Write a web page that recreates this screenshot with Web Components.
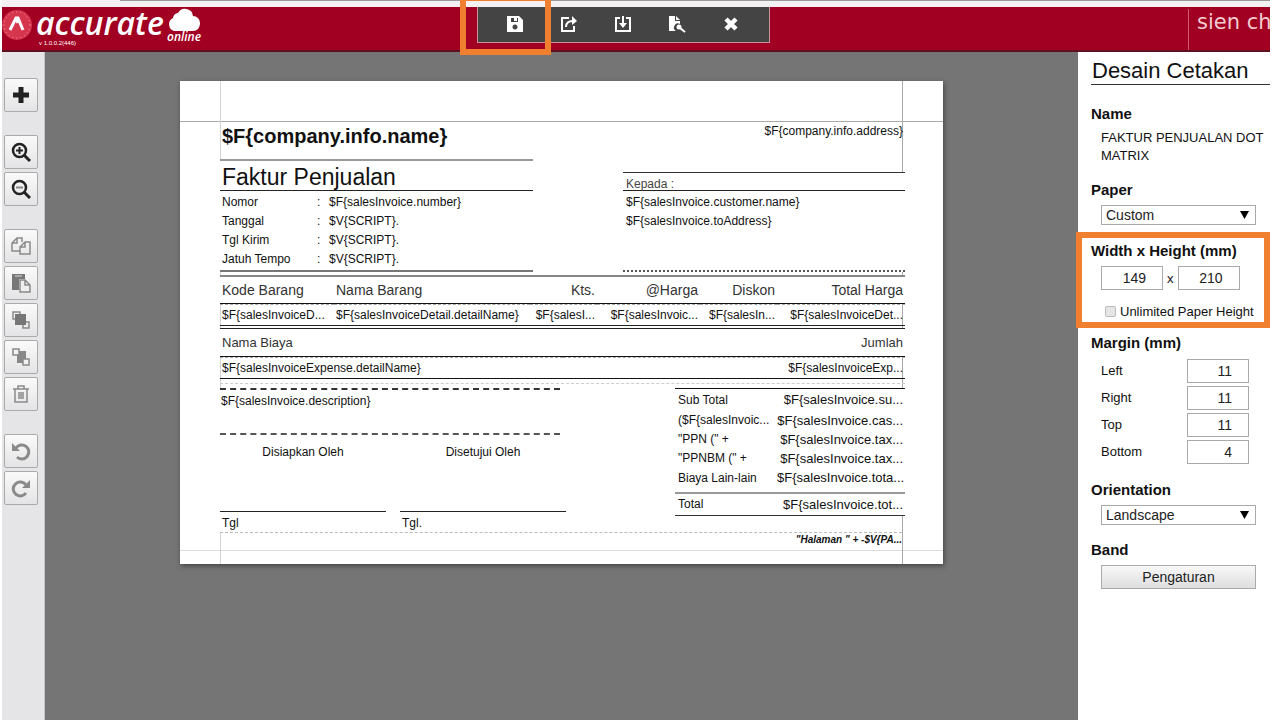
<!DOCTYPE html>
<html lang="id">
<head>
<meta charset="utf-8">
<title>Desain Cetakan</title>
<style>
  html, body { margin: 0; height: 100%; }
  body {
    font-family: "Liberation Sans", Arial, sans-serif;
    font-size: 13px; color: #111; background: #fff; overflow: hidden;
  }
</style>
</head>
<body>
<designer-app>
  <app-header slot="header">
    <tool-button label="Simpan">
      <svg width="18" height="18" viewBox="0 0 18 18"><path fill="#fff" fill-rule="evenodd" d="M1 1h12l4 4v12H1zM5 3v4h7V3zM9 9.500a2.500 2.500 0 1 0 0.010 0z"/><path fill="#fff" d="M8 3h3v3H8z"/></svg>
    </tool-button>
    <tool-button label="Ekspor">
      <svg width="18" height="18" viewBox="0 0 18 18" fill="none" stroke="#fff" stroke-width="2"><path d="M9 3H2v13h12v-5"/><path d="M6 12c0-5 3-6 7-6" /><path d="M12 1l5 5-5 4z" fill="#fff" stroke="none"/></svg>
    </tool-button>
    <tool-button label="Impor">
      <svg width="18" height="18" viewBox="0 0 18 18" fill="none" stroke="#fff" stroke-width="2"><path d="M6 3H2v13h14V3h-4M9 1v9"/><path d="M5 8h8l-4 5z" fill="#fff" stroke="none"/></svg>
    </tool-button>
    <tool-button label="Pratinjau">
      <svg width="18" height="18" viewBox="0 0 18 18"><path fill="#fff" d="M1 1h6v5h5v3a4 4 0 0 0-4 7H1zM8 1l4 4H8z"/><circle cx="11" cy="12" r="2.500" fill="#fff"/><path d="M12 13l5 4" stroke="#fff" stroke-width="2"/></svg>
    </tool-button>
    <tool-button label="Tutup">
      <svg width="18" height="18" viewBox="0 0 18 18"><path d="M4 4l10 10M14 4L4 14" stroke="#fff" stroke-width="4.500"/></svg>
    </tool-button>
  </app-header>
  <tool-rail slot="rail"></tool-rail>
  <report-paper slot="canvas"></report-paper>
  <design-panel slot="panel"></design-panel>
</designer-app>

<script>
const define = (name, html, setup) => {
  const tpl = document.createElement('template');
  tpl.innerHTML = html;
  customElements.define(name, class extends HTMLElement {
    constructor() {
      super();
      this.attachShadow({ mode: 'open' }).append(tpl.content.cloneNode(true));
    }
    connectedCallback() { if (setup) setup(this, this.shadowRoot); }
  });
};

define('designer-app', `
<style>
  :host { display: flex; flex-direction: column; min-height: 100vh; padding: 0 10px 0 2px; box-sizing: border-box; }
  .strip { height: 7px; background: #f3f1f1; display: flex; justify-content: flex-end; }
  .strip i { height: 1px; width: calc(100% - 118px); background: #999; }
  .body { flex: 1; display: grid; grid-template-columns: 43px 1fr 192px; }
  .rail { background: #e5e4e6; border-right: 1px solid #c4c4c4; }
  .canvas { background: #757575; padding-top: 29px; }
</style>
<div class="strip"><i></i></div>
<slot name="header"></slot>
<div class="body">
  <div class="rail"><slot name="rail"></slot></div>
  <main class="canvas"><slot name="canvas"></slot></main>
  <slot name="panel"></slot>
</div>`);

define('app-header', `
<style>
  :host {
    display: grid; grid-template-columns: 475px auto 1fr 82px; height: 45px; box-sizing: border-box;
    background: #a20022; border-bottom: 2px solid #5e1020; color: #fff;
  }
  .logo { display: flex; align-items: flex-start; color: #fff; text-decoration: none; font-family: "Open Sans", sans-serif; font-style: italic; font-weight: 700; }
  .mark { margin-top: 3px; }
  .word { display: flex; flex-direction: column; margin-left: 4px; width: 131px; }
  .word b { font-size: 32px; font-weight: 600; line-height: 32px; height: 33px; }
  .word small { font: 6px/6px "Liberation Sans", sans-serif; margin-left: 3px; }
  .on { display: flex; flex-direction: column; font-size: 12px; line-height: 12px; font-weight: 600; }
  nav {
    position: relative; display: flex; height: 36px; padding: 0 11px 0 10px; box-sizing: border-box;
    background: #444; border: 1px solid #c9929b; border-top: 0;
  }
  .mark-box { position: absolute; left: -18px; top: -12px; width: 79px; height: 48px; border: 6px solid #f08030; pointer-events: none; }
  .user {
    grid-column: 4; border-left: 1px solid #d25a6c; padding-left: 8px; margin-top: 2px; overflow: hidden;
    white-space: nowrap; font: 21px/26px "DejaVu Sans", sans-serif; color: #f3ccd2;
  }
</style>
<a class="logo" href="#" aria-label="accurate online">
  <svg class="mark" width="30" height="30" viewBox="0 0 30 30"><circle cx="15" cy="15" r="15" fill="#d5364e"/><circle cx="15" cy="15" r="13" fill="none" stroke="#f0a0aa" stroke-dasharray="1 3"/><path d="M8 20l6-12h2l5 12M14 8l2 5" fill="none" stroke="#fff" stroke-width="3"/></svg>
  <span class="word"><b>accurate</b><small>v 1.0.0.2(446)</small></span>
  <span class="on">
    <svg width="34" height="24" viewBox="0 0 34 24"><path fill="#fff" d="M7 24a7 7 0 0 1-1-13 6 6 0 0 1 5-5 8 8 0 0 1 15 3 7 7 0 0 1 7 7c0 5-3 8-7 8z"/></svg>
    <span>online</span>
  </span>
</a>
<nav aria-label="Dokumen"><slot></slot><span class="mark-box"></span></nav>
<div class="user">sien ch</div>`);

define('tool-button', `
<style>
  :host { display: block; }
  button { width: 54px; height: 34px; padding: 0; border: 0; background: none; display: grid; place-items: center; }
</style>
<button type="button"><slot></slot></button>`,
(host, root) => root.querySelector('button').setAttribute('aria-label', host.getAttribute('label')));

define('rail-button', `
<style>
  :host { display: block; }
  button {
    width: 34px; height: 34px; padding: 0; box-sizing: border-box; display: grid; place-items: center;
    border: 1px solid #aaa; border-radius: 2px; background: linear-gradient(#fafafa, #e4e4e6);
  }
</style>
<button type="button"><slot></slot></button>`,
(host, root) => root.querySelector('button').setAttribute('aria-label', host.getAttribute('label')));

define('tool-rail', `
<style>
  :host { display: flex; flex-direction: column; gap: 23px; padding: 26px 0 0 2px; }
  div { display: flex; flex-direction: column; gap: 3px; }
  svg { width: 20px; height: 20px; fill: none; stroke: #8a8a8a; stroke-width: 2; }
  .dark { stroke: #222; }
</style>
<div>
  <rail-button label="Tambah"><svg class="dark" viewBox="0 0 20 20"><path d="M10 2v16M2 10h16" stroke-width="5"/></svg></rail-button>
</div>
<div>
  <rail-button label="Perbesar"><svg class="dark" viewBox="0 0 20 20"><circle cx="8.500" cy="8.500" r="6.500" stroke-width="2.500"/><path d="M13 13l6 6" stroke-width="3"/><path d="M8.500 5v7M5 8.500h7"/></svg></rail-button>
  <rail-button label="Perkecil"><svg class="dark" viewBox="0 0 20 20"><circle cx="8.500" cy="8.500" r="6.500" stroke-width="2.500"/><path d="M13 13l6 6" stroke-width="3"/><path d="M5 8.500h7" stroke="#888"/></svg></rail-button>
</div>
<div>
  <rail-button label="Salin"><svg viewBox="0 0 20 20"><path d="M9 15H1V7l5-5h5v4M6 2v5H1M9 18V11l5-5h5v12zM14 6v5H9" stroke-width="1.500"/></svg></rail-button>
  <rail-button label="Tempel"><svg viewBox="0 0 20 20"><path d="M1 1h13v5H8v11H1z" fill="#777" stroke="none"/><path d="M4 3h7" stroke="#ddd" stroke-width="1"/><path d="M9 7h5l5 5v7H9zM14 7v5h5" fill="#eee" stroke-width="1.500"/></svg></rail-button>
  <rail-button label="Ke depan"><svg viewBox="0 0 20 20"><path d="M2 2h7v7H2zM12 12h6v6h-6z" stroke-width="1.500"/><path d="M4 4h11v11H4z" fill="#777" stroke="none"/></svg></rail-button>
  <rail-button label="Ke belakang"><svg viewBox="0 0 20 20"><path d="M6 4h9v12H6z" fill="#888" stroke="none"/><path d="M2 2h6v6H2zM12 12h6v6h-6z" style="fill:#f2f2f2" stroke-width="1.500"/></svg></rail-button>
  <rail-button label="Hapus"><svg viewBox="0 0 20 20"><path d="M2 5h16M7 5V2h6v3M4 5v13h12V5M8 8v7M10 8v7M12 8v7" stroke-width="1.500"/></svg></rail-button>
</div>
<div>
  <rail-button label="Urungkan"><svg viewBox="0 0 20 20"><path d="M5 7a7 7 0 1 1 1 9" stroke-width="3"/><path d="M1 2v8h8z" fill="#8a8a8a" stroke="none"/></svg></rail-button>
  <rail-button label="Ulangi"><svg viewBox="0 0 20 20"><path d="M15 7a7 7 0 1 0 0 8" stroke-width="3"/><path d="M19 2v8h-8z" fill="#8a8a8a" stroke="none"/></svg></rail-button>
</div>`);

define('report-paper', `
<style>
  :host {
    display: block; position: relative; width: 763px; margin: 0 auto; box-sizing: border-box;
    padding: 41px 38px 13px 40px; background: #fff; box-shadow: 1px 2px 5px #444;
    font-size: 12px; line-height: 19px; white-space: nowrap; color: #111;
  }
  .guide { position: absolute; background: #c4c4c4; }
  .gt { left: 0; right: 0; top: 40px; height: 1px; background: #aaa; }
  .gb { left: 0; right: 0; bottom: 13px; height: 1px; background: #ddd; }
  .gl { top: 0; bottom: 0; left: 40px; width: 1px; background: #d4d4d4; }
  .gr { top: 0; bottom: 0; right: 40px; width: 1px; background: #aaa; }
  .sheet { position: relative; }
  .cols { display: flex; justify-content: space-between; }
  .left { width: 313px; }
  .right { width: 282px; }
  h1, h2 { margin: 0; padding-left: 2px; }
  h1 { font-size: 20px; line-height: 28px; height: 37px; font-weight: 700; border-bottom: 2px solid #999; }
  h2 { font-size: 23px; line-height: 32px; height: 29px; font-weight: 400; border-bottom: 1px solid #222; background: #fff; }
  dl { margin: 0; padding: 2px 2px 1px; height: 76px; display: grid; grid-template-columns: 95px 12px 1fr; grid-auto-rows: 19px; background: #fff; border-bottom: 2px solid #777; }
  dt, dd { margin: 0; }
  .addr { height: 50px; text-align: right; padding-right: 2px; border-bottom: 1px solid #333; }
  .kepada { height: 17px; line-height: 22px; padding-left: 3px; border-bottom: 1px solid #222; background: #fff; color: #444; }
  .to { height: 77px; padding: 2px 3px 0; background: #fff; border-bottom: 2px dotted #555; }
  .to p { margin: 0; }
  table { width: 100%; border-collapse: separate; border-spacing: 0; table-layout: fixed; }
  th, td { padding: 0 2px; font-weight: 400; text-align: right; overflow: hidden; line-height: 19px; }
  .l { text-align: left; }
  .items th { height: 26px; font-size: 13px; background: #fff; color: #333; border-bottom: 1px solid #111; }
  .items td { height: 20px; border-top: 1px dashed #aaa; }
  .detail { margin-top: 3px; border-top: 2px solid #888; }
  .detail th { font-size: 14px; }
  .detail td { border-bottom: 4px double #222; }
  .cost th { height: 27px; }
  .cost td { border-bottom: 1px solid #111; }
  .band { height: 9px; }
  .band i { display: block; height: 4px; border-bottom: 1px dashed #ccc; }
  .notes { width: 346px; }
  .desc { width: 340px; height: 43px; line-height: 22px; text-indent: 1px; border-top: 2px dashed #333; border-bottom: 2px dashed #555; background: #fff; }
  .signs { display: flex; gap: 14px; background: #fff; }
  .sign { width: 166px; }
  .sign p { margin: 0; height: 65px; padding-top: 11px; line-height: 12px; text-align: center; border-bottom: 1px solid #222; }
  .sign span { display: block; height: 20px; line-height: 22px; padding-left: 2px; overflow: hidden; }
  .totals { width: 230px; }
  .totals th, .totals td { height: 19px; background: #fff; }
  .totals td { font-size: 13px; }
  .totals th { text-align: left; padding-left: 3px; }
  .totals tr:first-child > * { border-top: 1px solid #111; height: 22px; line-height: 22px; }
  .totals tr:nth-child(5) > * { border-bottom: 2px solid #999; height: 24px; line-height: 20px; vertical-align: top; }
  .totals tr:last-child > * { border-bottom: 1px solid #333; height: 21px; }
  .page { border-top: 1px dashed #bbb; margin-right: 3px; height: 18px; text-align: right; font-size: 10px; line-height: 14px; font-style: italic; font-weight: 700; }
</style>
<div class="guide gt"></div><div class="guide gb"></div><div class="guide gl"></div><div class="guide gr"></div>
<div class="sheet">
  <div class="cols">
    <div class="left">
      <h1>$F{company.info.name}</h1>
      <h2>Faktur Penjualan</h2>
      <dl>
        <dt>Nomor</dt><dd>:</dd><dd>$F{salesInvoice.number}</dd>
        <dt>Tanggal</dt><dd>:</dd><dd>$V{SCRIPT}.</dd>
        <dt>Tgl Kirim</dt><dd>:</dd><dd>$V{SCRIPT}.</dd>
        <dt>Jatuh Tempo</dt><dd>:</dd><dd>$V{SCRIPT}.</dd>
      </dl>
    </div>
    <div class="right">
      <div class="addr">$F{company.info.address}</div>
      <div class="kepada">Kepada :</div>
      <div class="to"><p>$F{salesInvoice.customer.name}</p><p>$F{salesInvoice.toAddress}</p></div>
    </div>
  </div>
  <table class="items detail">
    <colgroup><col style="width:114px"><col style="width:196px"><col style="width:67px"><col style="width:103px"><col style="width:77px"><col></colgroup>
    <thead><tr><th class="l">Kode Barang</th><th class="l">Nama Barang</th><th>Kts.</th><th>@Harga</th><th>Diskon</th><th>Total Harga</th></tr></thead>
    <tbody><tr><td class="l">$F{salesInvoiceD...</td><td class="l">$F{salesInvoiceDetail.detailName}</td><td>$F{salesI...</td><td>$F{salesInvoic...</td><td>$F{salesIn...</td><td>$F{salesInvoiceDet...</td></tr></tbody>
  </table>
  <table class="items cost">
    <thead><tr><th class="l">Nama Biaya</th><th>Jumlah</th></tr></thead>
    <tbody><tr><td class="l">$F{salesInvoiceExpense.detailName}</td><td>$F{salesInvoiceExp...</td></tr></tbody>
  </table>
  <div class="band"><i></i></div>
  <div class="cols">
    <div class="notes">
      <div class="desc">$F{salesInvoice.description}</div>
      <div class="signs">
        <div class="sign"><p>Disiapkan Oleh</p><span>Tgl</span></div>
        <div class="sign"><p>Disetujui Oleh</p><span>Tgl.</span></div>
      </div>
    </div>
    <div class="totals">
      <table>
        <colgroup><col style="width:100px"><col></colgroup>
        <tr><th>Sub Total</th><td>$F{salesInvoice.su...</td></tr>
        <tr><th>($F{salesInvoic...</th><td>$F{salesInvoice.cas...</td></tr>
        <tr><th>"PPN (" +</th><td>$F{salesInvoice.tax...</td></tr>
        <tr><th>"PPNBM (" +</th><td>$F{salesInvoice.tax...</td></tr>
        <tr><th>Biaya Lain-lain</th><td>$F{salesInvoice.tota...</td></tr>
        <tr><th>Total</th><td>$F{salesInvoice.tot...</td></tr>
      </table>
    </div>
  </div>
  <div class="page">"Halaman " + -$V{PA...</div>
</div>`);

define('panel-group', `
<style>
  :host { display: block; margin-top: 15px; }
  h3 { margin: 0 0 5px; font-size: 15px; line-height: 20px; font-weight: 700; }
  .body { margin-left: 10px; }
</style>
<h3></h3><div class="body"><slot></slot></div>`,
(host, root) => { root.querySelector('h3').textContent = host.getAttribute('label'); });

define('design-panel', `
<style>
  :host { display: block; padding-left: 13px; background: #fff; }
  h2 { margin: 0 0 19px; padding-left: 1px; height: 32px; line-height: 38px; font-size: 22px; font-weight: 400; border-bottom: 1px solid #333; }
  p { margin: 0; line-height: 18px; }
  .pick { position: relative; width: 155px; }
  select {
    display: block; width: 100%; height: 20px; padding: 0 4px; box-sizing: border-box; appearance: none;
    border: 1px solid #aaa; border-radius: 0; background: #fff; font: 14px/18px "Liberation Sans", sans-serif; color: #222;
  }
  .pick svg { position: absolute; right: 7px; top: 6px; pointer-events: none; }
  input[type=text] {
    width: 62px; height: 24px; padding: 0 16px 0 0; box-sizing: border-box; border: 1px solid #aaa;
    text-align: right; font: 14px "Liberation Sans", sans-serif; color: #222;
  }
  .size { display: flex; align-items: center; gap: 4px; }
  .check { display: flex; align-items: center; height: 20px; margin: 11px 0 0 4px; gap: 4px; white-space: nowrap; }
  .check input { appearance: none; margin: 0; width: 11px; height: 11px; border: 1px solid #bbb; border-radius: 2px; background: #e6e6e6; }
  .rows { display: grid; grid-template-columns: 86px 62px; gap: 3px 0; line-height: 24px; padding: 1px 0; }
  .hot { position: absolute; left: -15px; right: 0; top: -9px; bottom: -7px; border: 6px solid #f08030; pointer-events: none; }
  .wrap { position: relative; margin-top: 16px; }
  .wrap + panel-group { margin-top: 12px; }
  .wrap panel-group { margin: 0; }
  button {
    width: 155px; height: 24px; padding: 0; border: 1px solid #aaa; border-radius: 0;
    background: linear-gradient(#f8f8f8, #dedee0); font: 14px "Liberation Sans", sans-serif; color: #222;
  }
</style>
<h2>Desain Cetakan</h2>
<panel-group label="Name"><p>FAKTUR PENJUALAN DOT<br>MATRIX</p></panel-group>
<panel-group label="Paper">
  <div class="pick"><select aria-label="Paper"><option>Custom</option></select><svg width="9" height="8"><path d="M0 0h9l-4.500 8z"/></svg></div>
</panel-group>
<div class="wrap">
  <panel-group label="Width x Height (mm)">
    <div class="size"><input type="text" value="149" aria-label="Width"><span>x</span><input type="text" value="210" aria-label="Height"></div>
    <label class="check"><input type="checkbox">Unlimited Paper Height</label>
  </panel-group>
  <span class="hot"></span>
</div>
<panel-group label="Margin (mm)">
  <div class="rows">
    <label for="ml">Left</label><input type="text" id="ml" value="11">
    <label for="mr">Right</label><input type="text" id="mr" value="11">
    <label for="mt">Top</label><input type="text" id="mt" value="11">
    <label for="mb">Bottom</label><input type="text" id="mb" value="4">
  </div>
</panel-group>
<panel-group label="Orientation">
  <div class="pick"><select aria-label="Orientation"><option>Landscape</option></select><svg width="9" height="8"><path d="M0 0h9l-4.500 8z"/></svg></div>
</panel-group>
<panel-group label="Band"><button type="button">Pengaturan</button></panel-group>`);
</script>
</body>
</html>
